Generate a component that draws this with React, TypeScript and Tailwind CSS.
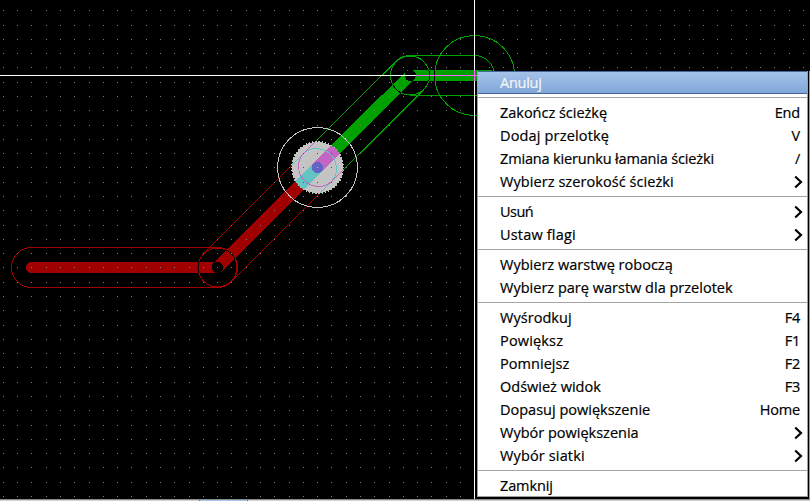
type Item = {
  label: string;
  track: string;
  hint?: string;
  sub?: boolean;
  active?: boolean;
};

const groups: Item[][] = [
  [{ label: "Anuluj", track: "tracking-[-0.25px]", active: true }],
  [
    { label: "Zakończ ścieżkę", track: "tracking-[-0.02px]", hint: "End" },
    { label: "Dodaj przelotkę", track: "tracking-[0.16px]", hint: "V" },
    { label: "Zmiana kierunku łamania ścieżki", track: "tracking-[-0.16px]", hint: "/" },
    { label: "Wybierz szerokość ścieżki", track: "tracking-[0.07px]", sub: true },
  ],
  [
    { label: "Usuń", track: "tracking-[-0.5px]", sub: true },
    { label: "Ustaw flagi", track: "tracking-[0.18px]", sub: true },
  ],
  [
    { label: "Wybierz warstwę roboczą", track: "tracking-[0.02px]" },
    { label: "Wybierz parę warstw dla przelotek", track: "tracking-[0.01px]" },
  ],
  [
    { label: "Wyśrodkuj", track: "tracking-[0.04px]", hint: "F4" },
    { label: "Powiększ", track: "tracking-[0.16px]", hint: "F1" },
    { label: "Pomniejsz", track: "tracking-[0.05px]", hint: "F2" },
    { label: "Odśwież widok", track: "tracking-[0px]", hint: "F3" },
    { label: "Dopasuj powiększenie", track: "tracking-[0px]", hint: "Home" },
    { label: "Wybór powiększenia", track: "tracking-[0px]", sub: true },
    { label: "Wybór siatki", track: "tracking-[0.14px]", sub: true },
  ],
  [{ label: "Zamknij", track: "tracking-[-0.12px]" }],
];

const PITCH = 100 / 7;
const xs = Array.from({ length: 57 }, (_, i) => Math.round(2.8 + i * PITCH));
const ys = Array.from({ length: 35 }, (_, i) => Math.round(10.3 + i * PITCH));

// Outline of a round-capped segment between two points
function stadium(x1: number, y1: number, x2: number, y2: number, r: number) {
  const d = Math.hypot(x2 - x1, y2 - y1);
  const nx = (-(y2 - y1) / d) * r;
  const ny = ((x2 - x1) / d) * r;
  return `M${x1 + nx} ${y1 + ny}A${r} ${r} 0 0 1 ${x1 - nx} ${y1 - ny}L${x2 - nx} ${y2 - ny}A${r} ${r} 0 0 1 ${x2 + nx} ${y2 + ny}Z`;
}

const VIA = { x: 317.5, y: 167.5 };
const redTrack = stadium(31.5, 267.5, 217.5, 267.5, 5.5) + stadium(217.5, 267.5, VIA.x, VIA.y, 5.9);
const greenTrack = stadium(410, 75.5, 490, 75.5, 5.5) + stadium(VIA.x, VIA.y, 410, 75.5, 5.9);

// Via body with its serrated rim
const rim = Array.from({ length: 100 }, (_, i) => {
  const a = (i / 100) * Math.PI * 2;
  const r = i % 2 ? 25.2 : 26.8;
  return `${(VIA.x + Math.cos(a) * r).toFixed(2)},${(VIA.y + Math.sin(a) * r).toFixed(2)}`;
}).join(" ");

function Board() {
  return (
    <svg className="block h-[499px] w-[810px]" viewBox="0 0 810 499" shapeRendering="crispEdges" fill="none">
      <defs>
        <clipPath id="via">
          <circle cx={VIA.x} cy={VIA.y} r="26" />
        </clipPath>
        <clipPath id="tracks">
          <path d={redTrack} />
          <path d={greenTrack} />
        </clipPath>
      </defs>

      <path d={redTrack} fill="#a00000" fillRule="evenodd" />
      <path d={greenTrack} fill="#00a000" fillRule="evenodd" />

      <g stroke="#a00000">
        <path d="M217.5 247.5H31.5A20 20 0 0 0 31.5 287.5H217.5A20 20 0 0 0 231.6 281.6L331.6 181.6" />
        <path d="M203.4 253.4L303.4 153.4" />
        <circle cx="217.5" cy="267.5" r="19.5" />
        <path d="M217.5 247.5A20 20 0 0 1 231.6 281.6" />
      </g>
      <g stroke="#00a000">
        <path d="M303.4 153.4L396 61.4A20 20 0 0 1 410 55.5H474.5A20 20 0 0 1 474.5 95.5H410" />
        <path d="M331.6 181.6L424 89.6" />
        <circle cx="410" cy="75.5" r="19.5" />
        <circle cx="474.5" cy="75.5" r="40" />
      </g>
      <g stroke="#000000" clipPath="url(#tracks)">
        <circle cx="217.5" cy="267.5" r="19.5" />
        <circle cx="410" cy="75.5" r="19.5" />
        <circle cx="474.5" cy="75.5" r="40" />
      </g>

      <circle cx={VIA.x} cy={VIA.y} r="40" stroke="#c4c4c4" />
      <polygon points={rim} fill="#c4c4c4" />
      <g clipPath="url(#via)">
        <path d={stadium(270, 215, VIA.x, VIA.y, 5.9)} fill="#64c4c4" />
        <path d={stadium(VIA.x, VIA.y, 365, 120, 5.9)} fill="#c464c4" />
        <path d="M303.4 153.4A20 20 0 0 1 331.6 181.6L300 213.2M303.4 153.4L280 176.8" stroke="#64c4c4" />
        <path d="M331.6 181.6A20 20 0 0 1 303.4 153.4L330 126.8M331.6 181.6L355 158.2" stroke="#c464c4" />
        <circle cx={VIA.x} cy={VIA.y} r="5.5" fill="#6464c4" />
      </g>

      {ys.map((y) =>
        xs.map((x) => {
          const onVia = Math.hypot(x - 317, y - 167) < 26;
          return <rect key={`${x}-${y}`} x={x} y={y} width="1" height="1" fill={onVia ? "#505050" : "#808080"} />;
        }),
      )}
      <rect x="317" y="167" width="1" height="1" fill="#d0c070" />

      <path d="M0 75.5H810M474.5 0V499" stroke="#ffffff" />
      <path d="M416 75.5H477M474.5 70V81" stroke="#ff60ff" />
    </svg>
  );
}

function Row({ item }: { item: Item }) {
  return (
    <div
      className={
        item.active
          ? "flex h-[23px] items-center justify-between border-y border-[#47669a] bg-linear-to-b from-[#a5c2e9] to-[#80a7d8] pr-[7px] pl-[22px] text-[#f5f5f5]"
          : "flex h-[23px] items-center justify-between pr-[7px] pl-[22px]"
      }
    >
      <span className={item.track}>{item.label}</span>
      {item.hint && <span className="tracking-[-0.2px]">{item.hint}</span>}
      {item.sub && (
        <svg className="mr-[-3px] h-[14px] w-[9px]" viewBox="0 0 9 14" fill="none" stroke="#000" strokeWidth="2.2">
          <path d="M1.2 1.5L7 7L1.2 12.5" />
        </svg>
      )}
    </div>
  );
}

export default function App() {
  return (
    <div className="relative flex h-[501px] w-[810px] flex-col overflow-hidden bg-black">
      <Board />
      <div className="flex h-[2px] border-t border-[#8a8a8a] bg-[#d6d2cd]">
        <div className="ml-[199px] h-px w-[49px] border-x border-[#4f74a8] bg-[#a5c5ee]" />
      </div>

      <div className="absolute top-[71px] left-[477px] flex h-[428px] w-[333px] flex-col border-r border-[#9a9a9a] bg-black pr-px pb-[2px]">
        <div className="flex h-[426px] flex-col border-r border-b border-l border-[#a0a0a0] bg-white font-['Open_Sans',sans-serif] text-[14.5px] leading-[21px] whitespace-nowrap text-black [-webkit-text-stroke:0.2px]">
          {groups.map((group, i) => (
            <div key={i}>
              {i > 0 && (
                <div className="h-[7px] pt-[3px]">
                  <div className="h-px bg-[#a4a4a4]" />
                </div>
              )}
              {group.map((item) => (
                <Row key={item.label} item={item} />
              ))}
            </div>
          ))}
        </div>
      </div>
    </div>
  );
}
